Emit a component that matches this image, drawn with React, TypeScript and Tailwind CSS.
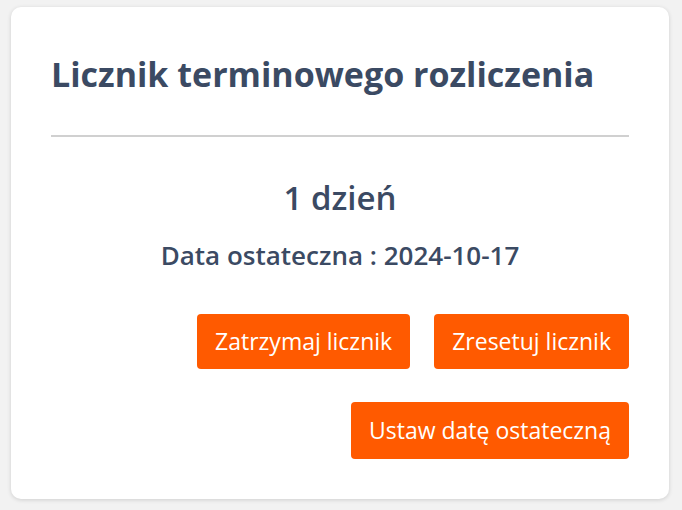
export default function App() {
  return (
    <div className="min-h-[510px] w-full bg-[#f2f2f2] pt-[7px] pb-[11px]" style={{ fontFamily: '"Open Sans", "Noto Sans", sans-serif' }}>
      <div className="ml-[11px] w-[658px] rounded-[10px] bg-white px-10 pt-[50px] pb-10 shadow-[0_1px_4px_rgba(0,0,0,0.15)]">
        <h1 className="text-[34px] font-bold leading-[34px] text-[#3b4a63]">Licznik terminowego rozliczenia</h1>
        <div className="mt-[44px] h-[2px] bg-[#d0d0d0]" />
        <div className="mt-[44px] text-center text-[33px] font-semibold leading-[33px] text-[#3b4a63]">1 dzień</div>
        <div className="mt-[28px] text-center text-[26px] font-semibold leading-[26px] text-[#3b4a63]">Data ostateczna : 2024-10-17</div>
        <div className="mt-[46px] flex flex-wrap justify-end gap-x-6 gap-y-[33px]">
          <button className="h-[55px] rounded-[4px] bg-[#ff5a00] px-[18px] text-[23px] text-white">Zatrzymaj licznik</button>
          <button className="h-[55px] rounded-[4px] bg-[#ff5a00] px-[18px] text-[23px] text-white">Zresetuj licznik</button>
          <button className="h-[57px] rounded-[4px] bg-[#ff5a00] px-[18px] text-[23px] text-white">Ustaw datę ostateczną</button>
        </div>
      </div>
    </div>
  );
}
